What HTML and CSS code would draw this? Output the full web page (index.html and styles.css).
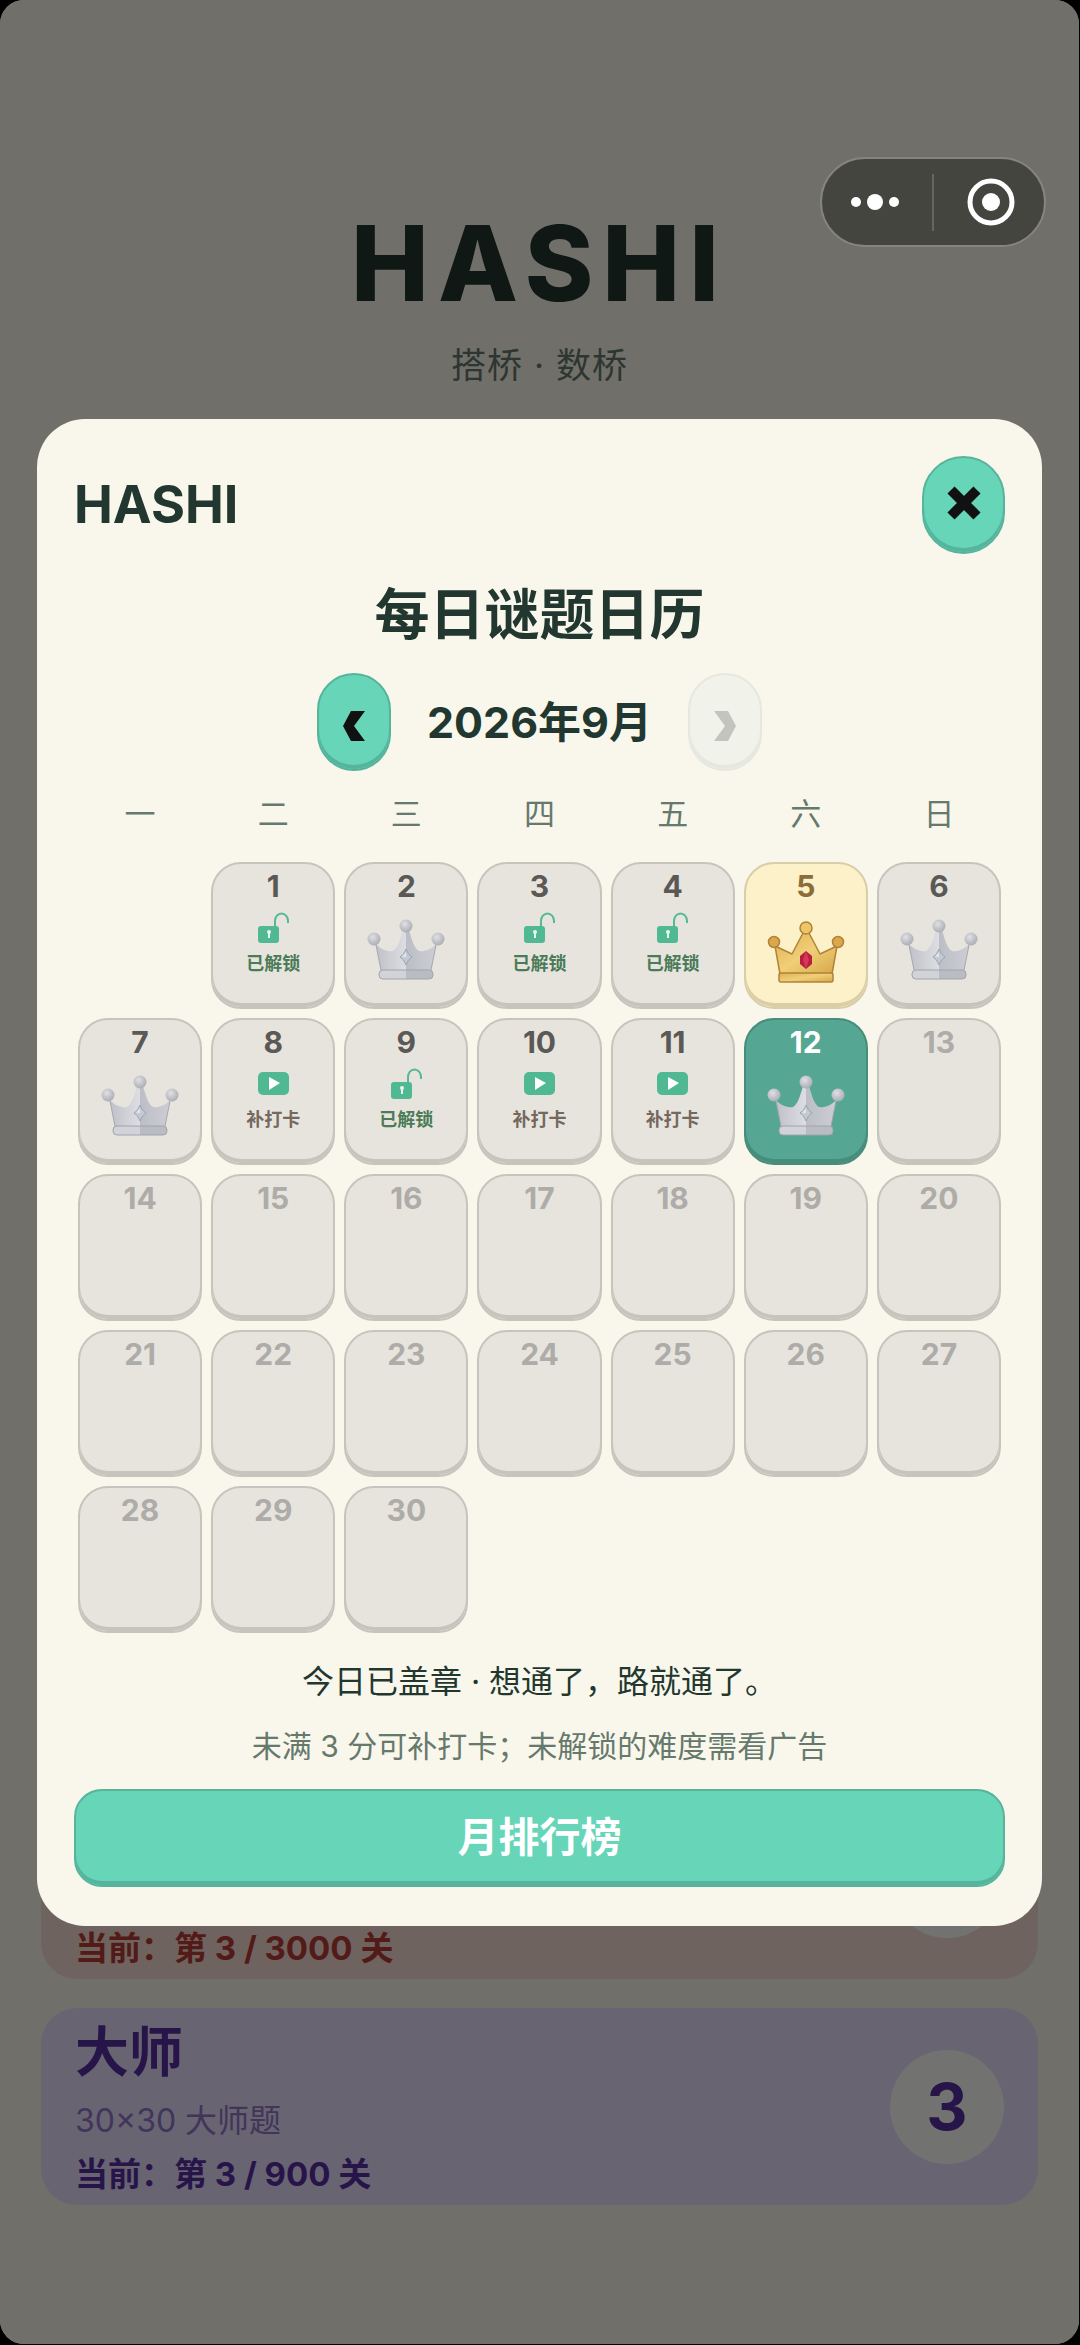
FILE: index.html
```html
<!DOCTYPE html>
<html lang="zh-CN">
<head>
    <meta charset="UTF-8">
    <meta name="viewport" content="width=device-width, initial-scale=1.0">
    <title>HASHI</title>
    <link rel="stylesheet" href="styles.css">
</head>
<body>
    <!-- Shared icons -->
    <svg class="icon-defs" aria-hidden="true">
        <defs>
            <linearGradient id="silver-left" x1="0" y1="0" x2="1" y2="0">
                <stop offset="0" stop-color="#bfc1c8"/>
                <stop offset="1" stop-color="#dddee3"/>
            </linearGradient>
            <linearGradient id="silver-right" x1="0" y1="0" x2="1" y2="0">
                <stop offset="0" stop-color="#bcbec6"/>
                <stop offset="1" stop-color="#cdced4"/>
            </linearGradient>
            <radialGradient id="silver-ball" cx="0.4" cy="0.35" r="0.7">
                <stop offset="0" stop-color="#e0e1e5"/>
                <stop offset="0.5" stop-color="#c3c5cb"/>
                <stop offset="1" stop-color="#a9abb2"/>
            </radialGradient>
            <linearGradient id="gold" x1="0" y1="0" x2="1" y2="1">
                <stop offset="0" stop-color="#e0b050"/>
                <stop offset="0.5" stop-color="#f0cf78"/>
                <stop offset="1" stop-color="#d7a546"/>
            </linearGradient>
            <symbol id="crown-silver" viewBox="0 0 78 66">
                <path d="M9 26C14 32 22 34 26 33C31 30 33 22 36 12H39V52H14Z" fill="url(#silver-left)"/>
                <path d="M69 26C64 32 56 34 52 33C47 30 45 22 42 12H39V52H64Z" fill="url(#silver-right)"/>
                <path d="M9 27L14 52M69 27L64 52" stroke="#a5a7ae" fill="none"/>
                <rect x="12" y="52" width="54" height="9" rx="4" fill="#d2d3d8"/>
                <path d="M39 52H62Q66 52 66 56V57Q66 61 62 61H39Z" fill="#babcc4"/>
                <rect x="12" y="52" width="54" height="9" rx="4" fill="none" stroke="#a2a4aa"/>
                <circle cx="39" cy="8" r="6.5" fill="url(#silver-ball)"/>
                <circle cx="7" cy="21" r="6.5" fill="url(#silver-ball)"/>
                <circle cx="71" cy="21" r="6.5" fill="url(#silver-ball)"/>
                <path d="M39 31Q41 37 45 39Q41 41 39 47Q37 41 33 39Q37 37 39 31Z" fill="#c3cad4" stroke="#9ea5b0"/>
                <path d="M39 34V39H35Z" fill="#e2e6ec"/>
            </symbol>
            <symbol id="crown-gold" viewBox="0 0 78 66">
                <path d="M8 28L25 36L36 15H42L53 36L70 28L65 56H13Z" fill="url(#gold)" stroke="#b08338" stroke-width="1.5" stroke-linejoin="round"/>
                <rect x="12" y="55" width="54" height="9" rx="2" fill="url(#gold)" stroke="#b08338" stroke-width="1.5"/>
                <circle cx="39" cy="10" r="6" fill="#eec567" stroke="#b08338" stroke-width="1.5"/>
                <circle cx="7" cy="24" r="5.5" fill="#dca64c" stroke="#b08338" stroke-width="1.5"/>
                <circle cx="71" cy="24" r="5.5" fill="#dca64c" stroke="#b08338" stroke-width="1.5"/>
                <path d="M39 33L45 38V46L39 51L33 46V38Z" fill="#b81f3f"/>
                <path d="M39 33L42 42L39 51L36 42Z" fill="#d43a57"/>
            </symbol>
            <symbol id="lock-open" viewBox="0 0 31 31">
                <path d="M17 14V9A6 7 0 0 1 30 9V11" fill="none" stroke="#55b997" stroke-width="2"/>
                <rect x="0" y="14" width="21" height="17" rx="3" fill="#50b993"/>
                <circle cx="11" cy="20" r="2" fill="#e7f5ee"/>
                <path d="M10 20H12V26H10Z" fill="#e7f5ee"/>
            </symbol>
            <symbol id="video" viewBox="0 0 31 31">
                <rect x="0" y="4" width="31" height="23" rx="5" fill="#50b993"/>
                <path d="M11 9L22 15L11 22Z" fill="#fff"/>
            </symbol>
        </defs>
    </svg>

    <div class="screen">
        <main class="home">
            <header class="home-header">
                <h1 class="home-title">HASHI</h1>
                <p class="home-subtitle">搭桥 · 数桥</p>
            </header>
            <div class="levels">
                <a href="#hard" class="level level-hard">
                    <span class="level-info">
                        <span class="level-progress">当前：第 3 / 3000 关</span>
                    </span>
                    <span class="level-badge"></span>
                </a>
                <a href="#master" class="level level-master">
                    <span class="level-info">
                        <span class="level-name">大师</span>
                        <span class="level-desc">30×30 大师题</span>
                        <span class="level-progress">当前：第 3 / 900 关</span>
                    </span>
                    <span class="level-badge">3</span>
                </a>
            </div>
        </main>

        <div class="overlay">
            <section class="modal" role="dialog" aria-labelledby="calendar-title">
                <div class="modal-header">
                    <span class="brand">HASHI</span>
                    <button class="btn btn-close" aria-label="关闭">
                        <svg width="34" height="34" viewBox="0 0 34 34"><path d="M4 4L30 30M30 4L4 30" stroke="#111" stroke-width="10"/></svg>
                    </button>
                </div>
                <h2 class="modal-title" id="calendar-title">每日谜题日历</h2>
                <div class="month-nav">
                    <button class="btn btn-month" aria-label="上个月">
                        <svg width="22" height="30" viewBox="0 0 22 30"><path d="M8 0H22L11 15L22 30H8L0 15Z" fill="#111"/></svg>
                    </button>
                    <span class="month-label">2026年9月</span>
                    <button class="btn btn-month" aria-label="下个月" disabled>
                        <svg width="22" height="30" viewBox="0 0 22 30"><path d="M14 0H0L11 15L0 30H14L22 15Z" fill="#c3c4be"/></svg>
                    </button>
                </div>
                <div class="weekdays">
                    <span>一</span><span>二</span><span>三</span><span>四</span><span>五</span><span>六</span><span>日</span>
                </div>
                <div class="days" id="days"></div>
                <p class="status">今日已盖章 · 想通了，路就通了。</p>
                <p class="hint">未满 3 分可补打卡；未解锁的难度需看广告</p>
                <button class="btn btn-rank">月排行榜</button>
            </section>
        </div>

        <div class="capsule">
            <button class="capsule-btn" aria-label="更多">
                <svg width="48" height="48" viewBox="0 0 48 48" fill="#fff"><circle cx="5" cy="24" r="5"/><circle cx="24" cy="24" r="8"/><circle cx="43" cy="24" r="5"/></svg>
            </button>
            <button class="capsule-btn" aria-label="退出">
                <svg width="48" height="48" viewBox="0 0 48 48"><circle cx="24" cy="24" r="21" fill="none" stroke="#fff" stroke-width="5"/><circle cx="24" cy="24" r="9" fill="#fff"/></svg>
            </button>
        </div>
    </div>

    <script>
        const firstWeekday = 2; // 1 = Monday
        const daysInMonth = 30;
        const today = 12;
        const records = {
            1: 'unlocked', 2: 'silver', 3: 'unlocked', 4: 'unlocked', 5: 'gold', 6: 'silver',
            7: 'silver', 8: 'makeup', 9: 'unlocked', 10: 'makeup', 11: 'makeup', 12: 'silver'
        };
        const content = {
            silver: '<svg class="crown"><use href="#crown-silver"/></svg>',
            gold: '<svg class="crown"><use href="#crown-gold"/></svg>',
            unlocked: '<svg class="day-icon"><use href="#lock-open"/></svg><span class="day-label">已解锁</span>',
            makeup: '<svg class="day-icon"><use href="#video"/></svg><span class="day-label">补打卡</span>'
        };

        function renderDays() {
            const daysElement = document.getElementById('days');

            for (let day = 1; day <= daysInMonth; day++) {
                const cell = document.createElement('button');
                cell.className = 'day';
                if (day === 1) cell.classList.add('start-' + firstWeekday);
                if (records[day]) cell.classList.add(records[day]);
                if (day === today) cell.classList.add('today');
                cell.disabled = day > today;
                cell.innerHTML = `<span class="day-number">${day}</span>${content[records[day]] || ''}`;
                daysElement.appendChild(cell);
            }
        }

        renderDays();
    </script>
</body>
</html>
```
FILE: styles.css
```css
* {
    box-sizing: border-box;
}
body {
    margin: 0;
    padding: 0 1px 1px 0;
    background-color: #000;
    color: #22372f;
    font-family: Inter, "Noto Sans CJK SC", sans-serif;
}
h1, h2, p {
    margin: 0;
}
button {
    padding: 0;
    border: none;
    font-family: inherit;
    cursor: pointer;
}
svg {
    display: block;
}
.icon-defs {
    position: absolute;
    width: 0;
    height: 0;
}
.screen {
    position: relative;
    border-radius: 24px;
    overflow: hidden;
}

/* Home page */
.home {
    display: flex;
    flex-direction: column;
    justify-content: space-between;
    min-height: calc(100vh - 1px);
    padding: 200px 41px 139px;
    background-color: #f9f7eb;
}
.home-header {
    text-align: center;
}
.home-title {
    font-size: 104px;
    line-height: 126px;
    font-weight: 800;
    letter-spacing: 9px;
}
.home-subtitle {
    margin-top: 14px;
    font-size: 35px;
    line-height: 50px;
    letter-spacing: 1px;
    color: #66796d;
}
.levels {
    display: flex;
    flex-direction: column;
    gap: 29px;
}
.level {
    display: flex;
    justify-content: space-between;
    align-items: center;
    min-height: 197px;
    padding: 0 34px;
    border-radius: 36px;
    text-decoration: none;
}
.level-hard {
    background-color: #f7dcd5;
    color: #b83c36;
}
.level-master {
    background-color: #e7defd;
    color: #5730a5;
}
.level-info {
    display: flex;
    flex-direction: column;
    align-self: flex-end;
    padding: 12px 0 4px;
}
.level-name {
    margin-bottom: 8px;
    font-size: 54px;
    line-height: 66px;
    font-weight: 700;
}
.level-desc {
    font-size: 32px;
    line-height: 53px;
    opacity: 0.6;
}
.level-progress {
    font-size: 33px;
    line-height: 54px;
    font-weight: 700;
}
.level-badge {
    display: flex;
    justify-content: center;
    align-items: center;
    width: 114px;
    height: 114px;
    border-radius: 50%;
    background-color: #fdfdfb;
    font-size: 64px;
    font-weight: 700;
}

/* Calendar modal */
.overlay {
    position: absolute;
    inset: 0;
    display: flex;
    justify-content: center;
    align-items: center;
    padding: 0 37px;
    background-color: rgba(0, 0, 0, 0.55);
}
.modal {
    width: 100%;
    padding: 37px 37px 39px;
    border-radius: 48px;
    background-color: #f9f7eb;
    text-align: center;
}
.modal-header {
    display: flex;
    justify-content: space-between;
    align-items: center;
}
.brand {
    font-size: 52px;
    line-height: 64px;
    font-weight: 700;
}
.btn {
    display: flex;
    justify-content: center;
    align-items: center;
    height: 98px;
    padding-bottom: 4px;
    border: 2px solid #57b49c;
    border-radius: 42px;
    background-color: #66d5b8;
    box-shadow: inset 0 -4px 0 #57b49c;
}
.btn:disabled {
    border-color: #e6e8e0;
    background-color: #f1f3eb;
    box-shadow: inset 0 -4px 0 #e6e8e0;
}
.btn-close {
    width: 83px;
}
.modal-title {
    margin-top: 27px;
    font-size: 55px;
    line-height: 66px;
    font-weight: 700;
}
.month-nav {
    display: flex;
    justify-content: center;
    align-items: center;
    gap: 36px;
    margin-top: 26px;
}
.btn-month {
    width: 74px;
    padding: 8px 0 0;
}
.month-label {
    font-size: 43px;
    line-height: 54px;
    font-weight: 700;
}
.weekdays, .days {
    display: grid;
    grid-template-columns: repeat(7, 1fr);
    gap: 9px;
    margin: 19px 4px 0;
}
.weekdays {
    font-size: 31px;
    line-height: 48px;
    color: #66796d;
}
.days {
    margin-top: 24px;
}
.day {
    display: flex;
    flex-direction: column;
    align-items: center;
    height: 147px;
    padding-top: 4px;
    border: 2px solid #c7c4bd;
    border-radius: 30px;
    background-color: #e7e4de;
    box-shadow: inset 0 -4px 0 #c7c4bd;
    color: #5b5955;
}
.start-2 {
    grid-column-start: 2;
}
.day:disabled {
    color: #aeaca8;
}
.day-number {
    font-size: 30px;
    line-height: 36px;
    font-weight: 700;
}
.day-icon {
    width: 31px;
    height: 31px;
    margin-top: 8px;
}
.day-label {
    margin-top: 8px;
    font-size: 18px;
    line-height: 26px;
    font-weight: 700;
    color: #75685f;
}
.unlocked .day-label {
    color: #4b7b58;
}
.crown {
    width: 78px;
    height: 66px;
    margin-top: 14px;
}
.day.gold {
    border-color: #d9cea8;
    background-color: #fcf1c8;
    box-shadow: inset 0 -4px 0 #d9cea8;
    color: #8a6d38;
}
.day.today {
    border-color: #488c7c;
    background-color: #55a692;
    box-shadow: inset 0 -4px 0 #488c7c;
    color: #fff;
}
.status {
    margin-top: 24px;
    font-size: 32px;
    line-height: 50px;
}
.hint {
    margin-top: 16px;
    font-size: 30px;
    line-height: 46px;
    color: #66796d;
}
.btn-rank {
    width: 100%;
    margin-top: 20px;
    padding-bottom: 8px;
    border-radius: 28px;
    color: #fff;
    font-size: 41px;
    font-weight: 700;
}

/* Mini program capsule */
.capsule {
    position: absolute;
    top: 157px;
    right: 33px;
    display: flex;
    align-items: center;
    width: 226px;
    height: 90px;
    border: 2px solid #85847f;
    border-radius: 45px;
    background-color: #45453f;
}
.capsule-btn {
    display: flex;
    flex: 1;
    justify-content: center;
    align-items: center;
    height: 57px;
    padding-right: 4px;
    background: none;
}
.capsule-btn + .capsule-btn {
    padding: 0 0 0 4px;
    border-left: 2px solid #66665f;
}
```
